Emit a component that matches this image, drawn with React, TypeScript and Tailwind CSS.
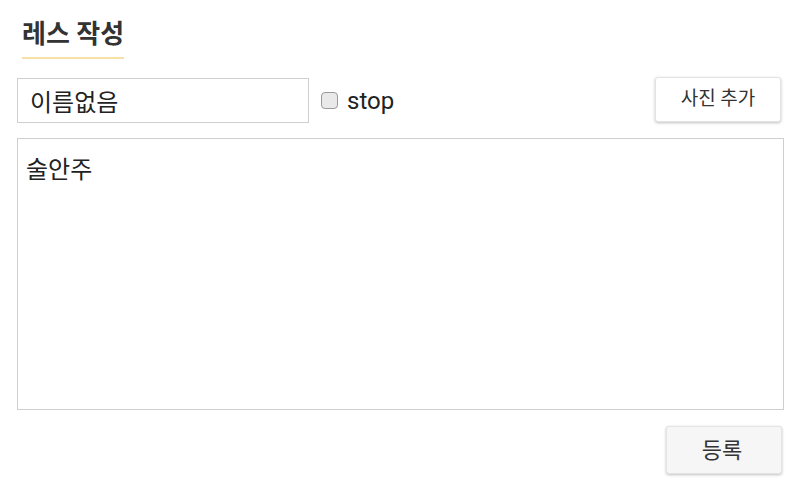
import { useState } from "react";

const font = { fontFamily: 'Roboto, "Noto Sans CJK KR", sans-serif' };

export default function App() {
  const [name, setName] = useState("이름없음");
  const [stop, setStop] = useState(false);
  const [body, setBody] = useState("술안주");

  return (
    <div className="w-[800px] h-[480px] bg-white text-[#222]" style={font}>
      <div className="px-[17px] pt-[18px]">
        {/* title */}
        <div className="pl-[5px]">
          <h2 className="inline-block text-[26px] leading-[32px] font-bold text-[#333] pb-[7px] border-b-2 border-[#f7e0a6]">
            레스 작성
          </h2>
        </div>

        {/* name / stop / photo */}
        <div className="mt-[19px] flex items-center">
          <input
            value={name}
            onChange={(e) => setName(e.target.value)}
            className="w-[292px] h-[45px] border border-[#cfcfcf] px-[12px] text-[24px] text-[#222] outline-none"
          />
          <label className="ml-[12px] flex items-center gap-[9px] text-[24px] text-[#222]">
            <input
              type="checkbox"
              checked={stop}
              onChange={(e) => setStop(e.target.checked)}
              className="w-[17px] h-[17px] appearance-none rounded-[4px] border border-[#9a9a9a] bg-[#e9e9e9]"
            />
            stop
          </label>
          <button className="ml-auto mr-[2px] -mt-[3px] w-[126px] h-[45px] rounded-[3px] border border-[#e4e4e4] bg-white text-[19px] text-[#333] shadow-[0_1px_3px_rgba(0,0,0,0.25)]">
            사진 추가
          </button>
        </div>

        {/* body */}
        <textarea
          value={body}
          onChange={(e) => setBody(e.target.value)}
          className="mt-[15px] block w-[767px] h-[272px] resize-none border border-[#cfcfcf] px-[8px] py-[16px] text-[24px] leading-[30px] text-[#222] outline-none"
        />

        <div className="mt-[16px] flex justify-end">
          <button className="mr-[1px] w-[116px] h-[48px] rounded-[3px] border border-[#e4e4e4] bg-[#f6f6f6] pr-[4px] text-[22px] text-[#333] shadow-[0_1px_3px_rgba(0,0,0,0.25)]">
            등록
          </button>
        </div>
      </div>
    </div>
  );
}
